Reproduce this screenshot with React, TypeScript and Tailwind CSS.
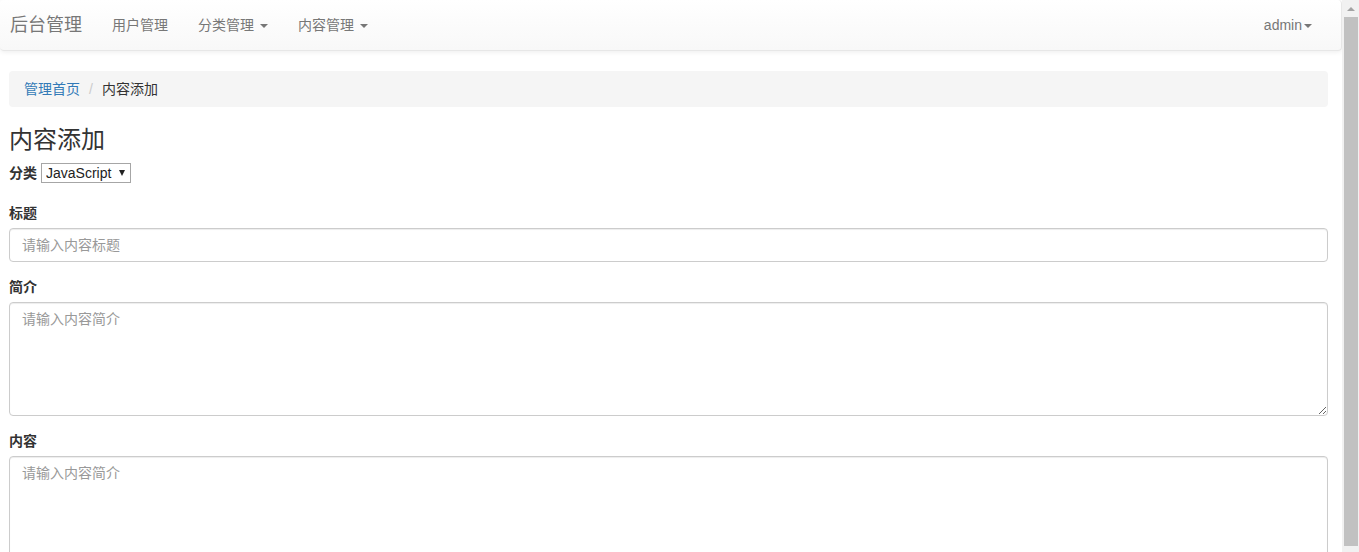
import { useState } from "react";

const font = { fontFamily: '"Liberation Sans", "Noto Sans CJK SC", sans-serif' };

function Caret() {
  return (
    <span className="ml-[2px] inline-block h-0 w-0 border-x-[4px] border-t-[4px] border-x-transparent border-t-[#777] align-middle" />
  );
}

const field =
  "block w-full rounded-[4px] border border-[#ccc] px-[12px] py-[6px] text-[14px] leading-[20px] text-[#555] shadow-[inset_0_1px_1px_rgba(0,0,0,0.075)] outline-none placeholder:text-[#999]";

export default function App() {
  const [category, setCategory] = useState("JavaScript");
  const [title, setTitle] = useState("");
  const [intro, setIntro] = useState("");
  const [content, setContent] = useState("");

  return (
    <div className="flex h-screen bg-white text-[14px] leading-[20px] text-[#333]" style={font}>
      <div className="min-w-0 flex-1 overflow-hidden">
        {/* Navbar */}
        <nav className="mb-[20px] flex h-[51px] items-center rounded-[4px] border-b border-r border-[#e7e7e7] bg-gradient-to-b from-white to-[#f8f8f8] pl-[10px] pr-[15px] shadow-[0_1px_5px_rgba(0,0,0,0.075)]">
          <a className="pr-[15px] text-[18px] leading-[20px] text-[#777]">后台管理</a>
          <ul className="flex">
            <li className="px-[15px] text-[#777]">用户管理</li>
            <li className="px-[15px] text-[#777]">
              分类管理 <Caret />
            </li>
            <li className="px-[15px] text-[#777]">
              内容管理 <Caret />
            </li>
          </ul>
          <div className="ml-auto pl-[15px] pr-[14px] text-[#777]">
            admin
            <Caret />
          </div>
        </nav>

        <div className="pl-[9px] pr-[14px]">
          {/* Breadcrumb */}
          <ol className="flex h-[36px] items-center rounded-[4px] bg-[#f5f5f5] px-[15px]">
            <li className="text-[#337ab7]">管理首页</li>
            <li className="ml-[9px] w-[4px] text-[#ccc]">/</li>
            <li className="ml-[9px] text-[#333]">内容添加</li>
          </ol>

          <h3 className="mt-[20px] mb-[10px] text-[24px] leading-[26px] font-normal">内容添加</h3>

          <div className="flex h-[20px] items-center">
            <label className="font-bold">分类</label>
            <div className="relative ml-[4px]">
              <select
                value={category}
                onChange={(e) => setCategory(e.target.value)}
                className="h-[20px] w-[90px] appearance-none border border-[#a6a6a6] bg-white pl-[4px] pr-[16px] text-[14px] leading-[18px] text-[#222] outline-none"
              >
                <option>JavaScript</option>
                <option>HTML</option>
                <option>CSS</option>
              </select>
              <span className="pointer-events-none absolute right-[6px] top-[7px] h-0 w-0 border-x-[3px] border-t-[6px] border-x-transparent border-t-[#222]" />
            </div>
          </div>

          <div className="mt-[20px] mb-[15px]">
            <label className="mb-[5px] block font-bold">标题</label>
            <input
              value={title}
              onChange={(e) => setTitle(e.target.value)}
              placeholder="请输入内容标题"
              className={`${field} h-[34px]`}
            />
          </div>

          <div className="mb-[15px]">
            <label className="mb-[5px] block font-bold">简介</label>
            <textarea
              value={intro}
              onChange={(e) => setIntro(e.target.value)}
              placeholder="请输入内容简介"
              className={`${field} h-[114px]`}
            />
          </div>

          <div>
            <label className="mb-[5px] block font-bold">内容</label>
            <textarea
              value={content}
              onChange={(e) => setContent(e.target.value)}
              placeholder="请输入内容简介"
              className={`${field} h-[114px]`}
            />
          </div>
        </div>
      </div>

      {/* Scrollbar */}
      <div className="flex w-[17px] shrink-0 flex-col bg-[#f1f1f1]">
        <div className="flex h-[17px] items-center justify-center">
          <span className="h-0 w-0 border-x-[4px] border-b-[4px] border-x-transparent border-b-[#a3a3a3]" />
        </div>
        <div className="mb-[6px] ml-[2px] mr-[1px] flex-1 bg-[#c1c1c1]" />
      </div>
    </div>
  );
}
